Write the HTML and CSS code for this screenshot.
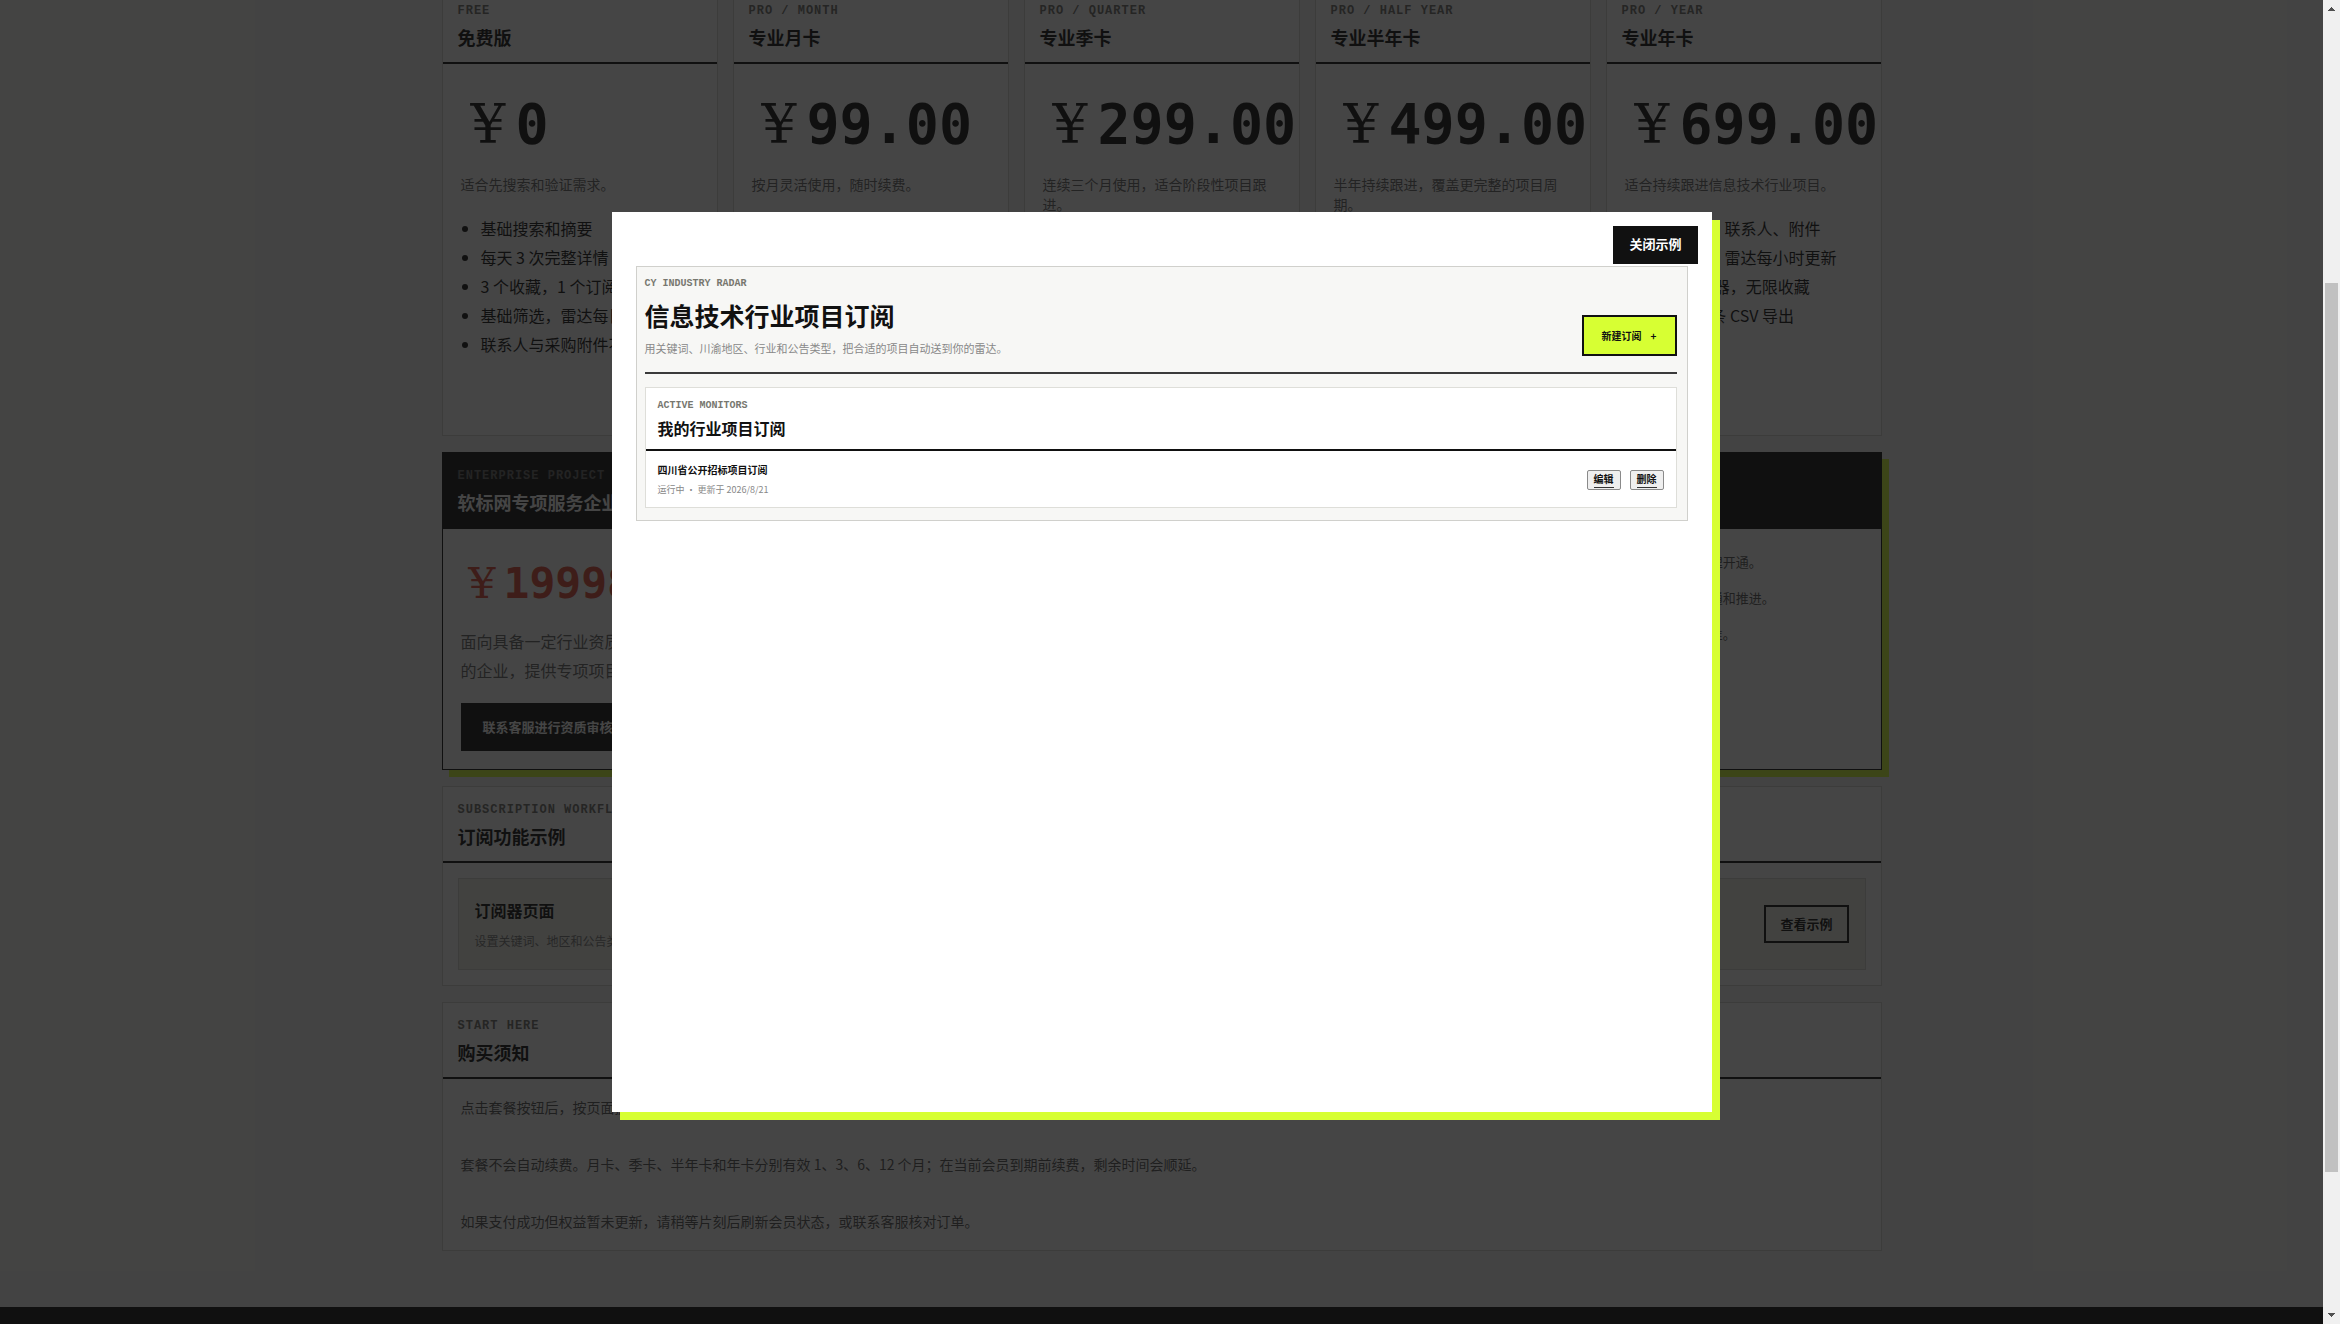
FILE: index.html
```
<!DOCTYPE html>
<html lang="zh-CN">
<head>
    <meta charset="UTF-8">
    <meta name="viewport" content="width=device-width, initial-scale=1.0">
    <title>会员套餐</title>
    <link rel="stylesheet" href="styles.css">
</head>
<body>
    <div class="page">
        <main class="container">
            <section class="plans">
                <article class="panel">
                    <header class="panel-head">
                        <p class="eyebrow">FREE</p>
                        <h2>免费版</h2>
                    </header>
                    <div class="plan-body">
                        <p class="price"><span class="yen">¥</span>0</p>
                        <p class="plan-desc">适合先搜索和验证需求。</p>
                        <ul>
                            <li>基础搜索和摘要</li>
                            <li>每天 3 次完整详情</li>
                            <li>3 个收藏，1 个订阅器</li>
                            <li>基础筛选，雷达每日更新</li>
                            <li>联系人与采购附件不可见</li>
                        </ul>
                    </div>
                </article>
                <article class="panel">
                    <header class="panel-head">
                        <p class="eyebrow">PRO / MONTH</p>
                        <h2>专业月卡</h2>
                    </header>
                    <div class="plan-body">
                        <p class="price"><span class="yen">¥</span>99.00</p>
                        <p class="plan-desc">按月灵活使用，随时续费。</p>
                    </div>
                </article>
                <article class="panel">
                    <header class="panel-head">
                        <p class="eyebrow">PRO / QUARTER</p>
                        <h2>专业季卡</h2>
                    </header>
                    <div class="plan-body">
                        <p class="price"><span class="yen">¥</span>299.00</p>
                        <p class="plan-desc">连续三个月使用，适合阶段性项目跟进。</p>
                    </div>
                </article>
                <article class="panel">
                    <header class="panel-head">
                        <p class="eyebrow">PRO / HALF YEAR</p>
                        <h2>专业半年卡</h2>
                    </header>
                    <div class="plan-body">
                        <p class="price"><span class="yen">¥</span>499.00</p>
                        <p class="plan-desc">半年持续跟进，覆盖更完整的项目周期。</p>
                    </div>
                </article>
                <article class="panel">
                    <header class="panel-head">
                        <p class="eyebrow">PRO / YEAR</p>
                        <h2>专业年卡</h2>
                    </header>
                    <div class="plan-body">
                        <p class="price"><span class="yen">¥</span>699.00</p>
                        <p class="plan-desc">适合持续跟进信息技术行业项目。</p>
                        <ul>
                            <li>完整详情、联系人、附件</li>
                            <li>完整筛选，雷达每小时更新</li>
                            <li>10 个订阅器，无限收藏</li>
                            <li>每月 500 条 CSV 导出</li>
                        </ul>
                    </div>
                </article>
            </section>

            <section class="panel enterprise">
                <header class="panel-head">
                    <p class="eyebrow">ENTERPRISE PROJECT</p>
                    <h2>软标网专项服务企业版</h2>
                </header>
                <div class="enterprise-body">
                    <div>
                        <p class="price"><span class="yen">¥</span>19998</p>
                        <p class="enterprise-desc">面向具备一定行业资质<br>的企业，提供专项项目服务。</p>
                        <button class="btn-dark btn-large" type="button">联系客服进行资质审核</button>
                    </div>
                    <div class="enterprise-notes">
                        <p>资质审核通过后，由客服专员为企业办理开通。</p>
                        <p>专项顾问全程参与，协助企业对项目沟通和推进。</p>
                        <p>服务范围和具体权益以双方合同约定为准。</p>
                    </div>
                </div>
            </section>

            <section class="panel">
                <header class="panel-head">
                    <p class="eyebrow">SUBSCRIPTION WORKFLOW</p>
                    <h2>订阅功能示例</h2>
                </header>
                <div class="example-body">
                    <div class="example-row">
                        <div>
                            <h3>订阅器页面</h3>
                            <p>设置关键词、地区和公告类型。</p>
                        </div>
                        <button class="btn-outline" type="button">查看示例</button>
                    </div>
                </div>
            </section>

            <section class="panel">
                <header class="panel-head">
                    <p class="eyebrow">START HERE</p>
                    <h2>购买须知</h2>
                </header>
                <div class="notice-body">
                    <p>点击套餐按钮后，按页面提示完成支付。</p>
                    <p>套餐不会自动续费。月卡、季卡、半年卡和年卡分别有效 1、3、6、12 个月；在当前会员到期前续费，剩余时间会顺延。</p>
                    <p>如果支付成功但权益暂未更新，请稍等片刻后刷新会员状态，或联系客服核对订单。</p>
                </div>
            </section>
        </main>
        <footer class="footer"></footer>

        <div class="overlay">
            <div class="modal" role="dialog" aria-modal="true" aria-label="订阅器页面示例">
                <button class="btn-dark modal-close" type="button">关闭示例</button>
                <div class="demo">
                    <div class="demo-top">
                        <div>
                            <p class="demo-eyebrow">CY INDUSTRY RADAR</p>
                            <h1>信息技术行业项目订阅</h1>
                            <p class="demo-desc">用关键词、川渝地区、行业和公告类型，把合适的项目自动送到你的雷达。</p>
                        </div>
                        <button class="demo-new" type="button"><span>新建订阅</span><span>+</span></button>
                    </div>
                    <div class="demo-panel">
                        <div class="demo-head">
                            <p class="demo-eyebrow">ACTIVE MONITORS</p>
                            <h2>我的行业项目订阅</h2>
                        </div>
                        <div class="demo-row">
                            <div>
                                <h3>四川省公开招标项目订阅</h3>
                                <p>运行中 ・ 更新于 2026/8/21</p>
                            </div>
                            <div class="demo-actions">
                                <button type="button"><span>编辑</span></button>
                                <button type="button"><span>删除</span></button>
                            </div>
                        </div>
                    </div>
                </div>
            </div>
        </div>
    </div>

    <div class="scrollbar" aria-hidden="true">
        <svg width="17" height="17" viewBox="0 0 17 17" shape-rendering="crispEdges"><path d="M5 11V10H6V9H7V8H8V7H9V8H10V9H11V10H12V11Z" fill="#505050"/></svg>
        <div class="track"><div class="thumb"></div></div>
        <svg width="17" height="17" viewBox="0 0 17 17" shape-rendering="crispEdges"><path d="M5 6H12V7H11V8H10V9H9V10H8V9H7V8H6V7H5Z" fill="#505050"/></svg>
    </div>
</body>
</html>
```
FILE: styles.css
```
* {
    box-sizing: border-box;
}
body {
    display: flex;
    height: 100vh;
    margin: 0;
    overflow: hidden;
    color: #111;
    font-family: "Noto Sans CJK SC", sans-serif;
}
h1, h2, h3, p, ul {
    margin: 0;
}
button {
    font-family: inherit;
    font-weight: bold;
    cursor: pointer;
}
.page {
    position: relative;
    flex: 1;
    min-width: 0;
    overflow: hidden;
    background-color: #f7f7f5;
}
.container {
    display: flex;
    flex-direction: column;
    gap: 16px;
    max-width: 1440px;
    margin: -13px auto 0;
    padding-bottom: 56px;
}
.footer {
    height: 200px;
    background-color: #111;
}

/* panels */
.panel {
    min-width: 0;
    border: 1px solid #d6d6d0;
    background-color: white;
}
.panel-head {
    padding: 16px 15px 11px;
    border-bottom: 2px solid #111;
}
.eyebrow {
    color: #6f6f6a;
    font-family: "Liberation Mono", monospace;
    font-size: 12px;
    font-weight: bold;
    letter-spacing: 1px;
    line-height: 15px;
}
.panel-head h2 {
    margin-top: 4px;
    font-size: 18px;
    line-height: 28px;
}

/* plans */
.plans {
    display: grid;
    grid-template-columns: repeat(5, minmax(0, 1fr));
    gap: 15px;
}
.plan-body {
    height: 371px;
    padding: 18px;
}
.price {
    margin-bottom: 8px;
    font-family: "DejaVu Sans Mono", monospace;
    font-size: 55px;
    font-weight: bold;
    line-height: 84px;
    white-space: nowrap;
}
.yen {
    display: inline-block;
    width: 1em;
    font-family: "DejaVu Serif", serif;
    font-weight: normal;
    text-align: center;
}
.plan-desc {
    min-height: 40px;
    color: #666;
    font-size: 14px;
    line-height: 20px;
}
.plan-body ul {
    padding-left: 20px;
    font-size: 16px;
    line-height: 29px;
}

/* enterprise */
.enterprise {
    border-color: #111;
    box-shadow: 7px 7px 0 #d7ff33;
}
.enterprise .panel-head {
    background-color: #111;
}
.enterprise h2 {
    color: white;
}
.enterprise .eyebrow {
    color: #666;
}
.enterprise-body {
    display: grid;
    grid-template-columns: 11fr 4fr;
    padding: 18px;
}
.enterprise .price {
    color: #df4b37;
    font-size: 43px;
    line-height: 72px;
}
.enterprise-desc {
    margin-bottom: 18px;
    color: #666;
    font-size: 16px;
    line-height: 29px;
}
.enterprise-notes {
    display: flex;
    flex-direction: column;
    gap: 6px;
    color: #555;
    font-size: 13px;
    line-height: 30px;
}
.btn-dark, .btn-outline {
    height: 38px;
    padding: 0 14px 2px;
    border: 2px solid #111;
    font-size: 13px;
}
.btn-dark {
    background-color: #111;
    color: white;
}
.btn-outline {
    background-color: transparent;
    color: #111;
}
.btn-large {
    display: block;
    height: 48px;
    padding: 0 20px 2px;
}

/* subscription example */
.example-body {
    padding: 15px;
}
.example-row {
    display: flex;
    align-items: center;
    justify-content: space-between;
    padding: 16px;
    border: 1px solid #d6d6d0;
    background-color: #f1f1e8;
}
.example-row h3 {
    margin-bottom: 4px;
    font-size: 16px;
    line-height: 30px;
}
.example-row p {
    color: #777;
    font-size: 12px;
    line-height: 24px;
}

/* notice */
.notice-body {
    display: flex;
    flex-direction: column;
    gap: 35px;
    padding: 17px 18px 18px;
    color: #555;
    font-size: 14px;
    line-height: 22px;
}

/* modal */
.overlay {
    position: absolute;
    inset: 0;
    display: grid;
    place-items: center;
    background-color: rgba(17, 17, 17, 0.78);
}
.modal {
    position: relative;
    width: 100%;
    max-width: 1100px;
    height: 68vh;
    padding: 54px 24px;
    background-color: white;
    box-shadow: 8px 8px 0 #d7ff33;
}
.modal-close {
    position: absolute;
    top: 14px;
    right: 14px;
}
.demo {
    padding: 9px 10px 12px 8px;
    border: 1px solid #d0d0cc;
    background-color: #f7f7f5;
}
.demo-top {
    display: flex;
    align-items: flex-end;
    justify-content: space-between;
    padding-bottom: 16px;
    border-bottom: 2px solid #3a3a3a;
}
.demo-eyebrow {
    color: #77776f;
    font-family: "Liberation Mono", monospace;
    font-size: 10px;
    font-weight: bold;
    line-height: 16px;
}
.demo-top h1 {
    margin: 4px 0 6px;
    font-size: 25px;
    line-height: 38px;
}
.demo-desc {
    color: #888;
    font-size: 11px;
    line-height: 16px;
}
.demo-new {
    display: flex;
    align-items: center;
    gap: 9px;
    height: 41px;
    padding: 0 18px;
    border: 2px solid #111;
    background-color: #d7ff33;
    color: #111;
    font-size: 10px;
}
.demo-panel {
    margin-top: 13px;
    border: 1px solid #deded9;
    background-color: white;
}
.demo-head {
    padding: 10px 12px 9px;
    border-bottom: 2px solid #111;
}
.demo-head h2 {
    margin-top: 2px;
    font-size: 16px;
    line-height: 24px;
}
.demo-row {
    display: flex;
    align-items: center;
    justify-content: space-between;
    padding: 10px 12px 8px;
}
.demo-row h3 {
    margin-bottom: 2px;
    font-size: 10px;
    line-height: 18px;
}
.demo-row p {
    color: #888;
    font-size: 9px;
    line-height: 18px;
}
.demo-actions {
    display: flex;
    gap: 9px;
}
.demo-actions button {
    width: 34px;
    height: 20px;
    padding: 0;
    border: 1px solid #8a8a8a;
    border-radius: 2px;
    background-color: #efefef;
    color: #111;
    font-size: 10px;
    line-height: 16px;
}
.demo-actions span {
    display: inline-block;
    border-bottom: 1px solid #333;
}

/* scrollbar */
.scrollbar {
    display: flex;
    flex-direction: column;
    width: 17px;
    background-color: #f0f0f0;
}
.track {
    display: flex;
    flex-direction: column;
    flex: 1;
    padding: 0 2px;
}
.track::before {
    content: "";
    flex: 266;
}
.thumb {
    flex: 889;
    background-color: #c1c1c1;
}
.track::after {
    content: "";
    flex: 135;
}
```
